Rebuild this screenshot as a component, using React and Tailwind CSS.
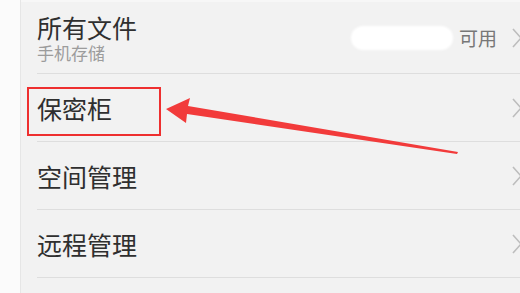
const rows = [
  { title: "保密柜", h: "h-[68px]" },
  { title: "空间管理", h: "h-[68px]" },
  { title: "远程管理", h: "h-[68px]" },
];

function Chevron() {
  return (
    <svg width="8" height="20" viewBox="0 0 8 20" className="shrink-0" aria-hidden="true">
      <polyline points="1,1 9,10 1,19" fill="none" stroke="#bdbdbd" strokeWidth="1.6" />
    </svg>
  );
}

export default function App() {
  return (
    <div
      className="relative flex h-[293px] w-[520px] overflow-hidden bg-white"
      style={{ fontFamily: '"Noto Sans CJK SC", "Noto Sans", sans-serif' }}
    >
      <div className="w-[21px] shrink-0 border-r border-[#e6e6e6] bg-[#fbfbfb]" />

      <div className="flex-1 border-t-2 border-[#f7f7f7] bg-[#f2f2f2] pl-[16px]">
        <div className="flex h-[72px] items-center justify-between border-b border-[#dedede]">
          <div className="flex flex-col pt-[1px]">
            <span className="text-[25px] leading-[25px] text-[#2f2f2f]">所有文件</span>
            <span className="mt-[4px] text-[17px] leading-[17px] text-[#9c9c9c]">手机存储</span>
          </div>
          <div className="flex items-center">
            <span className="mr-[6px] inline-block h-[24px] w-[102px] rounded-full bg-white blur-[1px]" />
            <span className="text-[19px] leading-[20px] text-[#777]">可用</span>
            <span className="ml-[15px] flex">
              <Chevron />
            </span>
          </div>
        </div>

        {rows.map((r) => (
          <div
            key={r.title}
            className={`flex ${r.h} items-center justify-between border-b border-[#dedede]`}
          >
            <span className="text-[25px] leading-[26px] text-[#2f2f2f]">{r.title}</span>
            <Chevron />
          </div>
        ))}
      </div>

      <div className="absolute left-[27px] top-[87px] h-[49px] w-[134px] border-2 border-[#ee2f2f]" />

      <svg
        className="absolute left-0 top-0"
        width="520"
        height="293"
        viewBox="0 0 520 293"
        aria-hidden="true"
      >
        <polygon
          points="166,109 190,98 188,106 458,152 457,154 187,114 186,123"
          fill="#f23b3b"
        />
      </svg>
    </div>
  );
}
